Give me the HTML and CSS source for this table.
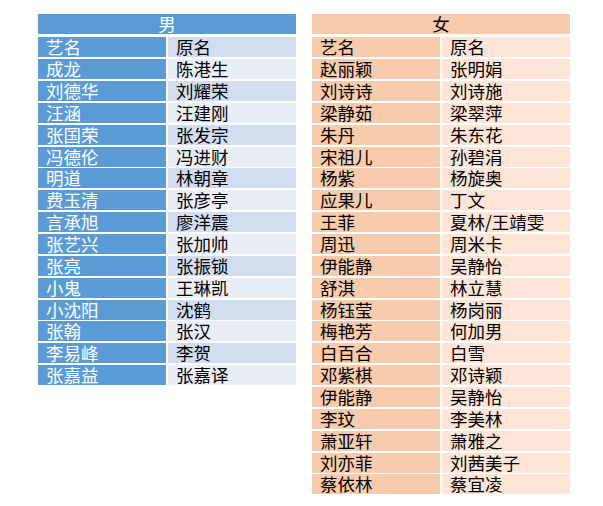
FILE: index.html
```html
<!DOCTYPE html>
<html lang="zh-CN">
<head>
<meta charset="utf-8">
<title>男女艺名</title>
<link rel="stylesheet" href="styles.css">
</head>
<body>
<div class="page">
  <div class="tbl male">
    <div class="head">男</div>
    <div class="grid">
      <div class="k">艺名</div><div class="v odd">原名</div>
      <div class="k">成龙</div><div class="v">陈港生</div>
      <div class="k">刘德华</div><div class="v odd">刘耀荣</div>
      <div class="k">汪涵</div><div class="v">汪建刚</div>
      <div class="k">张国荣</div><div class="v odd">张发宗</div>
      <div class="k">冯德伦</div><div class="v">冯进财</div>
      <div class="k">明道</div><div class="v odd">林朝章</div>
      <div class="k">费玉清</div><div class="v">张彦亭</div>
      <div class="k">言承旭</div><div class="v odd">廖洋震</div>
      <div class="k">张艺兴</div><div class="v">张加帅</div>
      <div class="k">张亮</div><div class="v odd">张振锁</div>
      <div class="k">小鬼</div><div class="v">王琳凯</div>
      <div class="k">小沈阳</div><div class="v odd">沈鹤</div>
      <div class="k">张翰</div><div class="v">张汉</div>
      <div class="k">李易峰</div><div class="v odd">李贺</div>
      <div class="k">张嘉益</div><div class="v">张嘉译</div>
    </div>
  </div>
  <div class="tbl female">
    <div class="head">女</div>
    <div class="grid">
      <div class="k">艺名</div><div class="v">原名</div>
      <div class="k">赵丽颖</div><div class="v">张明娟</div>
      <div class="k">刘诗诗</div><div class="v">刘诗施</div>
      <div class="k">梁静茹</div><div class="v">梁翠萍</div>
      <div class="k">朱丹</div><div class="v">朱东花</div>
      <div class="k">宋祖儿</div><div class="v">孙碧涓</div>
      <div class="k">杨紫</div><div class="v">杨旋奥</div>
      <div class="k">应果儿</div><div class="v">丁文</div>
      <div class="k">王菲</div><div class="v">夏林/王靖雯</div>
      <div class="k">周迅</div><div class="v">周米卡</div>
      <div class="k">伊能静</div><div class="v">吴静怡</div>
      <div class="k">舒淇</div><div class="v">林立慧</div>
      <div class="k">杨钰莹</div><div class="v">杨岗丽</div>
      <div class="k">梅艳芳</div><div class="v">何加男</div>
      <div class="k">白百合</div><div class="v">白雪</div>
      <div class="k">邓紫棋</div><div class="v">邓诗颖</div>
      <div class="k">伊能静</div><div class="v">吴静怡</div>
      <div class="k">李玟</div><div class="v">李美林</div>
      <div class="k">萧亚轩</div><div class="v">萧雅之</div>
      <div class="k">刘亦菲</div><div class="v">刘茜美子</div>
      <div class="k">蔡依林</div><div class="v">蔡宜凌</div>
    </div>
  </div>
</div>
</body>
</html>
```

FILE: styles.css
```css
html, body {
  margin: 0;
  padding: 0;
  background: #ffffff;
}
body {
  font-family: "Noto Sans CJK SC", "Noto Sans", sans-serif;
  font-size: 17.5px;
  color: #000000;
}
.page {
  display: flex;
  align-items: flex-start;
  gap: 16px;
  padding: 14px 0 0 38px;
}
.tbl {
  width: 258px;
  display: flex;
  flex-direction: column;
  gap: 3.3px;
}
.head {
  height: 20px;
  line-height: 20px;
  text-align: center;
}
.grid {
  display: grid;
  grid-template-columns: 128px 128px;
  column-gap: 2px;
  grid-auto-rows: 20px;
  row-gap: 1.87px;
}
.k, .v {
  line-height: 20px;
  padding-left: 8px;
  white-space: nowrap;
}
.male .head { background: #5b9bd5; color: #ffffff; }
.male .k { background: #5b9bd5; color: #ffffff; }
.male .v { background: #e9eef7; }
.male .v.odd { background: #d2ddef; }
.female .head { background: #f8cbad; color: #000000; }
.female .k { background: #f8cbad; }
.female .v { background: #fce4d6; }
```
